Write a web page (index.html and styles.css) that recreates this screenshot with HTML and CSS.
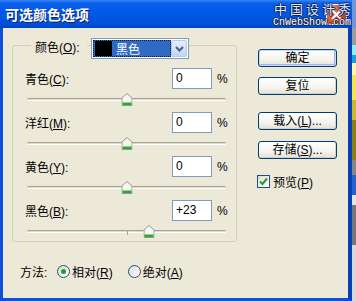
FILE: index.html
```html
<!DOCTYPE html>
<html>
<head>
	<meta charset="utf-8"/>
	<title>可选颜色选项</title>
	<link rel="stylesheet" href="styles.css">
</head>
<body>
<div class="screen">
	<div class="dialog">
		<div class="titlebar">
			<span class="title">可选颜色选项</span>
			<span class="close-btn">
				<svg width="13" height="13" viewBox="0 0 13 13"><path d="M2 2 L11 11 M11 2 L2 11" stroke="#fff" stroke-width="2.2"/></svg>
			</span>
			<div class="watermark">
				<div class="wm-cn">中国设计秀</div>
				<div class="wm-en">CnWebShow.com</div>
			</div>
		</div>

		<div class="content">
			<div class="left">
				<div class="group">
					<div class="group-head">
						<span class="lbl">颜色(<u>O</u>):</span>
						<div class="combo">
							<div class="combo-sel"><span class="swatch"></span><span class="txt">黑色</span></div>
							<div class="combo-btn">
								<svg width="9" height="6" viewBox="0 0 9 6"><path d="M1 1 L4.5 4.5 L8 1" fill="none" stroke="#4D6185" stroke-width="2"/></svg>
							</div>
						</div>
					</div>

					<div class="section">
						<div class="row"><span class="name">青色(<u>C</u>):</span><span class="num">0</span><span class="pct">%</span></div>
						<div class="slider">
							<span class="track"></span><span class="tick"></span>
							<svg class="thumb" style="left: 50%;" width="11" height="13" viewBox="0 0 11 13"><path d="M0.5 5 L5.5 0.5 L10.5 5 V12.5 H0.5 Z" fill="#F7F7F3" stroke="#8E9A8E"/><path d="M1 9.5 H10 V12 H1 Z" fill="#2BAA2B"/></svg>
						</div>
					</div>

					<div class="section">
						<div class="row"><span class="name">洋红(<u>M</u>):</span><span class="num">0</span><span class="pct">%</span></div>
						<div class="slider">
							<span class="track"></span><span class="tick"></span>
							<svg class="thumb" style="left: 50%;" width="11" height="13" viewBox="0 0 11 13"><path d="M0.5 5 L5.5 0.5 L10.5 5 V12.5 H0.5 Z" fill="#F7F7F3" stroke="#8E9A8E"/><path d="M1 9.5 H10 V12 H1 Z" fill="#2BAA2B"/></svg>
						</div>
					</div>

					<div class="section">
						<div class="row"><span class="name">黄色(<u>Y</u>):</span><span class="num">0</span><span class="pct">%</span></div>
						<div class="slider">
							<span class="track"></span><span class="tick"></span>
							<svg class="thumb" style="left: 50%;" width="11" height="13" viewBox="0 0 11 13"><path d="M0.5 5 L5.5 0.5 L10.5 5 V12.5 H0.5 Z" fill="#F7F7F3" stroke="#8E9A8E"/><path d="M1 9.5 H10 V12 H1 Z" fill="#2BAA2B"/></svg>
						</div>
					</div>

					<div class="section">
						<div class="row"><span class="name">黑色(<u>B</u>):</span><span class="num">+23</span><span class="pct">%</span></div>
						<div class="slider">
							<span class="track"></span><span class="tick"></span>
							<svg class="thumb" style="left: 61.5%;" width="11" height="13" viewBox="0 0 11 13"><path d="M0.5 5 L5.5 0.5 L10.5 5 V12.5 H0.5 Z" fill="#F7F7F3" stroke="#8E9A8E"/><path d="M1 9.5 H10 V12 H1 Z" fill="#2BAA2B"/></svg>
						</div>
					</div>
				</div>

				<div class="method">
					<span class="cap">方法:</span>
					<span class="radio on"></span><span class="opt">相对(<u>R</u>)</span>
					<span class="radio"></span><span class="opt">绝对(<u>A</u>)</span>
				</div>
			</div>

			<div class="right">
				<div class="btn default">确定</div>
				<div class="btn btn-reset">复位</div>
				<div class="btn btn-load">载入(<u>L</u>)...</div>
				<div class="btn btn-save">存储(<u>S</u>)...</div>
				<div class="check-row">
					<span class="checkbox">
						<svg width="11" height="11" viewBox="0 0 11 11"><path d="M2 5.5 L4.5 8 L9 2.5" fill="none" stroke="#21A121" stroke-width="2"/></svg>
					</span>
					<span>预览(<u>P</u>)</span>
				</div>
			</div>
		</div>
	</div>

	<div class="strip">
		<span class="s1"></span><span class="s2"></span><span class="s3"></span><span class="s4"></span>
		<span class="s5"></span><span class="s6"></span><span class="s7"></span><span class="s8"></span>
		<span class="s9"></span><span class="s10"></span><span class="s11"></span><span class="s12"></span>
		<span class="s13"></span>
	</div>
</div>
</body>
</html>
```

FILE: styles.css
```css
*{margin:0;padding:0;box-sizing:border-box;}
body{
	width:356px;
	height:301px;
	overflow:hidden;
	font-family:"Liberation Sans","Noto Sans CJK SC",sans-serif;
	font-size:12px;
	color:#000;
	background:#ECE9D8;
}
u{text-underline-offset:1px;}
.screen{display:flex;height:301px;}
.dialog{width:352px;display:flex;flex-direction:column;}

/* title bar */
.titlebar{
	height:28px;
	position:relative;
	display:flex;
	align-items:center;
	padding-left:5px;
	background:linear-gradient(#3C86F6 0,#0A5FEB 3px,#0058E6 45%,#0052DD 80%,#0046C8 100%);
}
.title{
	color:#fff;
	font-family:"Noto Sans CJK SC",sans-serif;
	font-size:14px;
	font-weight:bold;
	text-shadow:1px 1px 0 #0A1E6A;
}
.close-btn{
	position:absolute;
	left:326px;
	top:4px;
	width:21px;
	height:21px;
	border:1px solid #fff;
	border-radius:3px;
	background:linear-gradient(135deg,#F09070,#D8471E 60%,#C23A14);
	display:flex;
	align-items:center;
	justify-content:center;
}
.watermark{position:absolute;left:274px;top:1px;white-space:nowrap;}
.wm-cn{
	font-family:"Noto Sans CJK SC",sans-serif;
	font-size:13px;
	line-height:15px;
	letter-spacing:3px;
	color:#DDE8FA;
	text-shadow:1px 0 0 #0B2466,-1px 0 0 #0B2466,0 1px 0 #0B2466,0 -1px 0 #0B2466;
}
.wm-en{
	font-family:"Liberation Mono",monospace;
	font-size:10px;
	line-height:10px;
	margin-top:2px;
	margin-left:-1px;
	color:#fff;
	text-shadow:1px 0 0 #1B2A4A,-1px 0 0 #1B2A4A,0 1px 0 #1B2A4A,0 -1px 0 #1B2A4A;
}

/* body */
.content{
	flex:1;
	display:flex;
	background:#ECE9D8;
	border:3px solid #0C4FD8;
	border-top:0;
	border-right:4px solid #0A3FB8;
}
.left{width:234px;padding-left:9px;}
.group{
	margin-top:17px;
	width:225px;
	border:1px solid #D0D0BF;
	border-radius:3px;
}
.group-head{
	display:flex;
	height:21px;
	margin-top:-8px;
	margin-left:18px;
	margin-bottom:9px;
}
.group-head .lbl{
	width:56px;
	padding-left:4px;
	line-height:21px;
	background:#ECE9D8;
}
.combo{
	margin-left:4px;
	width:98px;
	height:21px;
	border:1px solid #7F9DB9;
	background:#fff;
	padding:1px;
	display:flex;
}
.combo-sel{
	flex:1;
	display:flex;
	align-items:center;
	background:#316AC5;
	outline:1px dotted #0A1A40;
	outline-offset:-1px;
}
.swatch{width:17px;height:15px;background:#000;margin-left:2px;}
.combo-sel .txt{color:#fff;margin-left:4px;}
.combo-btn{
	width:16px;
	border:1px solid #B6C9EF;
	border-radius:2px;
	background:linear-gradient(#E6EEFD,#C1D4FA);
	display:flex;
	align-items:center;
	justify-content:center;
}

.row{
	height:21px;
	display:flex;
	align-items:center;
	padding:0 10px 0 12px;
}
.row .name{flex:1;}
.num{
	width:40px;
	height:21px;
	border:1px solid #7F9DB9;
	background:#fff;
	padding-left:3px;
	line-height:19px;
}
.pct{width:9px;margin-left:5px;}

.slider{height:23px;position:relative;margin:0 10px 0 14px;}
.section:last-child .slider{height:20px;}
.track{
	position:absolute;
	left:0;
	right:0;
	top:9px;
	height:3px;
	border-top:1px solid #A3A39A;
	border-bottom:1px solid #fff;
	background:#DEDBCD;
	border-radius:2px;
}
.tick{position:absolute;left:50%;top:9px;width:1px;height:5px;background:#A4A49C;}
.thumb{position:absolute;top:4px;transform:translateX(-50%);display:block;}

.method{
	display:flex;
	align-items:center;
	height:13px;
	margin-top:23px;
	padding-left:8px;
}
.method .cap{width:37px;}
.radio{
	width:13px;
	height:13px;
	border:1px solid #1C5180;
	border-radius:50%;
	background:linear-gradient(135deg,#DCDCD7,#fff);
	position:relative;
	margin-right:2px;
}
.radio.on::after{
	content:"";
	position:absolute;
	left:3px;
	top:3px;
	width:5px;
	height:5px;
	border-radius:50%;
	background:#21A121;
}
.opt{margin-right:15px;}

/* buttons */
.right{
	margin-left:21px;
	padding-top:21px;
	display:flex;
	flex-direction:column;
	align-items:flex-start;
}
.btn{
	width:79px;
	height:18px;
	border:1px solid #003C74;
	border-radius:3px;
	background:linear-gradient(#FFFFFF,#F4F3EE 60%,#E3E0D6);
	box-shadow:inset -1px -1px 0 #D6D0C5;
	text-align:center;
	line-height:16px;
}
.btn.default{box-shadow:inset 0 0 0 1px #C6D8F6,inset -1px -1px 0 1px #9DBAEC;}
.btn-reset{margin-top:10px;}
.btn-load{margin-top:17px;}
.btn-save{margin-top:11px;}
.check-row{
	margin-top:14px;
	margin-left:-1px;
	display:flex;
	align-items:center;
}
.checkbox{
	width:13px;
	height:13px;
	border:1px solid #1C5180;
	background:linear-gradient(135deg,#DCDCD7,#fff);
	margin-right:3px;
	display:flex;
	align-items:center;
	justify-content:center;
}

/* background strip on the right */
.strip{flex:1;display:flex;flex-direction:column;}
.strip span{display:block;}
.s1{height:28px;background:#6E97DA;}
.s2{height:17px;background:#9C9C9C;}
.s3{height:10px;background:#8AF2FF;}
.s4{height:8px;background:#14A2E2;}
.s5{height:12px;background:#FFF7A6;}
.s6{height:25px;background:#F5E545;}
.s7{height:20px;background:#C9B925;}
.s8{height:40px;background:#8A8012;}
.s9{height:15px;background:#858585;}
.s10{height:20px;background:#2462D2;}
.s11{height:10px;background:#E4E4E4;}
.s12{height:40px;background:#777;}
.s13{flex:1;background:#D8D8D8;}
```
